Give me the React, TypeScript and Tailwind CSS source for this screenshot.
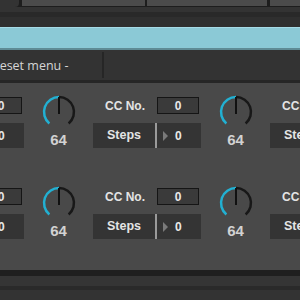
import React from "react";

const R = 15;
const C = 18;
const ANG = 140;
function pt(deg: number) {
  const r = (deg * Math.PI) / 180;
  return [C + R * Math.sin(r), C - R * Math.cos(r)];
}

function Knob() {
  const [lx, ly] = pt(-ANG);
  const [rx, ry] = pt(ANG);
  return (
    <svg width="36" height="36" viewBox="0 0 36 36">
      <path d={`M ${lx} ${ly} A ${R} ${R} 0 0 1 ${C} ${C - R}`} fill="none" stroke="#22b0d2" strokeWidth="2.5" />
      <path d={`M ${C} ${C - R} A ${R} ${R} 0 0 1 ${rx} ${ry}`} fill="none" stroke="#181818" strokeWidth="2.5" />
      <line x1={C} y1={C - R} x2={C} y2={C + 2} stroke="#111" strokeWidth="2" />
    </svg>
  );
}

function Column() {
  return (
    <div className="flex w-[177px] shrink-0">
      <div className="flex w-[108px] flex-col pt-[3px]">
        <div className="flex h-[17px] items-center">
          <div className="w-[64px] text-center text-[12px] font-bold text-[#e4e4e4]">CC No.</div>
          <div className="flex h-[17px] w-[42px] items-center justify-center border border-[#151515] bg-[#3a3a3a] text-[12px] font-bold text-[#e8e8e8]">
            0
          </div>
        </div>
        <div className="mt-[9px] flex h-[25px] w-[108px] bg-[#343434]">
          <div className="flex w-[62px] items-center justify-center text-[12.5px] font-bold text-[#e4e4e4]">Steps</div>
          <div className="w-[2px] bg-[#9a9a9a]" />
          <div className="flex flex-1 items-center pl-[6px]">
            <div className="h-0 w-0 border-y-[5px] border-l-[5px] border-y-transparent border-l-[#7a7a7a]" />
            <span className="ml-[7px] text-[12px] font-bold text-[#e8e8e8]">0</span>
          </div>
        </div>
      </div>
      <div className="flex w-[69px] flex-col items-center">
        <Knob />
        <div className="mt-[1px] text-[15px] font-bold leading-[17px] text-[#d2d2d2]">64</div>
      </div>
    </div>
  );
}

function Row() {
  return (
    <div className="-ml-[84px] flex h-[91px] shrink-0">
      <Column />
      <Column />
      <Column />
    </div>
  );
}

export default function App() {
  return (
    <div
      className="flex h-[300px] w-[300px] flex-col overflow-hidden bg-[#333333]"
      style={{ fontFamily: '"Liberation Sans", Arial, sans-serif' }}
    >
      {/* top strip */}
      <div className="flex h-[7px] shrink-0 bg-[#1d1d1d]">
        <div className="w-[19px] rounded-br-[4px] bg-[#333333]" />
        <div className="ml-[3px] h-[6px] w-[123px] bg-[#4b4b4b]" />
        <div className="ml-[2px] h-[6px] w-[120px] bg-[#4b4b4b]" />
        <div className="ml-[3px] h-[6px] flex-1 bg-[#4b4b4b]" />
      </div>
      <div className="h-[5px] shrink-0 bg-[#333333]" />
      <div className="h-[5px] shrink-0 bg-[#292929]" />
      <div className="h-[10px] shrink-0 bg-[#2f2f2f]" />
      {/* cyan bar */}
      <div className="h-[1px] shrink-0 bg-[#a6dbe6]" />
      <div className="h-[20px] shrink-0 bg-[#8bc9d6]" />
      <div className="h-[2px] shrink-0 bg-[#5f8b95]" />
      {/* header */}
      <div className="flex h-[30px] shrink-0 items-center bg-[#333333]">
        <div
          className="-ml-[13px] w-[115px] pt-[3px] text-[12.5px] text-[#d6d6d6]"
          style={{ fontFamily: '"Open Sans", sans-serif' }}
        >
          Preset menu -
        </div>
        <div className="h-[26px] w-[2px] bg-[#262626]" />
      </div>
      <div className="h-[3px] shrink-0 bg-[#262626]" />
      {/* panel */}
      <div className="flex h-[187px] shrink-0 flex-col overflow-hidden bg-[#494949] pt-[11px]">
        <Row />
        <Row />
      </div>
      <div className="h-[6px] shrink-0 bg-[#1f1f1f]" />
      <div className="h-[10px] shrink-0 bg-[#353535]" />
      <div className="h-[4px] shrink-0 bg-[#2a2a2a]" />
      <div className="flex-1 bg-[#333333]" />
    </div>
  );
}
